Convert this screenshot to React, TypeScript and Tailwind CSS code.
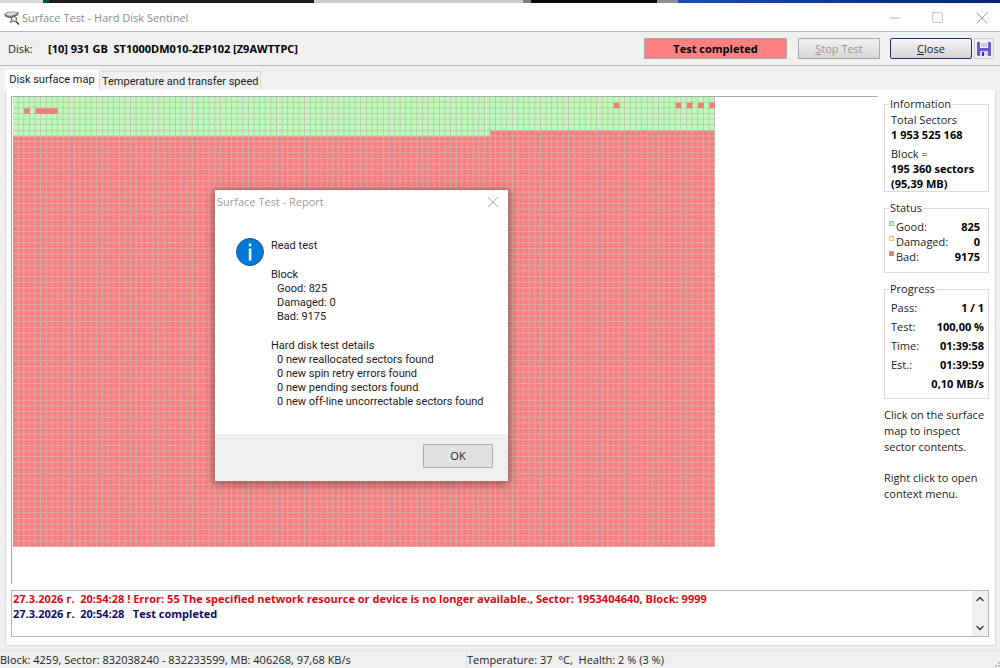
import { useState } from "react";
import { ChevronDown, ChevronUp, Minus, Square, X } from "lucide-react";

const COLUMNS = 125;
const ROWS = 80;
const CELL = 8;

// blocks that failed inside the readable area, as [row, column, count]
const BAD_BLOCKS = [
  [1, 107, 1],
  [1, 118, 1],
  [1, 120, 1],
  [1, 122, 1],
  [1, 124, 1],
  [2, 2, 1],
  [2, 4, 4],
];

const STATUS = [
  { label: "Good:", value: "825", box: "bg-[#c4f5c4] border-[#8fd08f]" },
  { label: "Damaged:", value: "0", box: "bg-[#fbf6c8] border-[#dccb62]" },
  { label: "Bad:", value: "9175", box: "bg-[#e87878] border-[#d98a8a]" },
];

const PROGRESS = [
  ["Pass:", "1 / 1"],
  ["Test:", "100,00 %"],
  ["Time:", "01:39:58"],
  ["Est.:", "01:39:59"],
  ["", "0,10 MB/s"],
];

function DiskIcon() {
  return (
    <svg viewBox="0 0 16 16" className="h-4 w-4 shrink-0">
      <path d="M0 4 4 1.5 15 2 14.5 5 6 8.5 1 6.5Z" fill="#8b9096" />
      <path d="M1.5 4 4.5 2.2 13.5 2.6 10 5 5 6Z" fill="#d5d9dc" />
      <path d="M1 5.5 5.5 7.5 14 4.5" stroke="#5a5f63" strokeWidth="1" fill="none" />
      <circle cx="10" cy="9" r="2.6" fill="#dcebec" stroke="#5d6367" />
      <path d="m12 11.5 3 3" stroke="#3d4245" strokeWidth="1.6" />
      <path d="m6 11 2 1.5" stroke="#5a6a60" strokeWidth="1.5" />
    </svg>
  );
}

function FloppyIcon() {
  return (
    <svg viewBox="0 0 16 16" className="h-4 w-4">
      <path d="M1 1h13l1 1v13H2l-1-1Z" fill="#665bd0" />
      <path d="M4 1h8v6H4Z" fill="#f4f4fb" />
      <path d="M5 3h6M5 5h6" stroke="#a9a5d8" strokeWidth="1" />
      <path d="M4 10h8v5H4Z" fill="#d9d8f2" />
      <path d="M6 11h2v4H6Z" fill="#4338a8" />
    </svg>
  );
}

function SurfaceMap() {
  return (
    <svg
      viewBox={`0 0 ${COLUMNS * CELL} ${ROWS * CELL}`}
      preserveAspectRatio="none"
      className="h-[450px] w-[702px]"
      role="img"
      aria-label="Disk surface map"
    >
      <defs>
        <pattern id="grid" width={CELL} height={CELL} patternUnits="userSpaceOnUse">
          <path d="M7.4 0V8M0 7.4H8" stroke="#ccb8b2" strokeWidth="1.2" fill="none" />
        </pattern>
      </defs>
      <rect width="1000" height="640" fill="#fb7d7f" />
      <rect width="1000" height={6 * CELL} fill="#b6ffb6" />
      <rect y={6 * CELL} width={85 * CELL} height={CELL} fill="#b6ffb6" />
      <rect width="1000" height="640" fill="url(#grid)" />
      {BAD_BLOCKS.map(([row, col, count]) => (
        <rect
          key={`${row}-${col}`}
          x={col * CELL}
          y={row * CELL}
          width={count * CELL}
          height={CELL}
          fill="#ee7e78"
        />
      ))}
    </svg>
  );
}

function Group({ title, children }: { title: string; children: React.ReactNode }) {
  return (
    <fieldset className="border border-[#dcdcdc] px-1">
      <legend className="px-px leading-4">{title}</legend>
      {children}
    </fieldset>
  );
}

function ReportDialog({ onClose }: { onClose: () => void }) {
  return (
    <div
      role="dialog"
      aria-label="Surface Test - Report"
      className="absolute top-[189px] left-[214px] w-[295px] border border-[#a87878] bg-white shadow-[0_2px_9px_rgba(60,0,0,0.45)]"
    >
      <div className="flex h-6 items-center justify-between pr-[5px] pl-0.5 text-[#9b9b9b]">
        <span>Surface Test - Report</span>
        <button aria-label="Close report" onClick={onClose}>
          <X size={20} strokeWidth={1} />
        </button>
      </div>
      <div className="flex h-[220px] gap-[7px] pt-6 pl-[21px] font-[Roboto,sans-serif]">
        <svg viewBox="0 0 28 28" className="h-7 w-7 shrink-0">
          <circle cx="14" cy="14" r="13.5" fill="#0078d7" stroke="#0b62ad" />
          <path d="M12.8 5.5h2.6v2.8h-2.6zM12.8 10.5h2.6v12h-2.6z" fill="#fff" />
        </svg>
        <div className="whitespace-pre pt-px leading-[14px]">
          <p>Read test</p>
          <p className="pt-[15px]">Block</p>
          <div className="pl-1.5">
            <p>Good: 825</p>
            <p>Damaged: 0</p>
            <p>Bad: 9175</p>
          </div>
          <p className="pt-[15px]">Hard disk test details</p>
          <div className="pl-1.5">
            <p>0 new reallocated sectors found</p>
            <p>0 new spin retry errors found</p>
            <p>0 new pending sectors found</p>
            <p>0 new off-line uncorrectable sectors found</p>
          </div>
        </div>
      </div>
      <div className="flex h-[47px] items-center justify-end bg-[#f0f0f0] pr-[15px] pb-[3px]">
        <button onClick={onClose} className="h-6 w-[70px] border border-[#adadad] bg-[#e1e1e1]">
          OK
        </button>
      </div>
    </div>
  );
}

export default function App() {
  const [reportOpen, setReportOpen] = useState(true);

  return (
    <div className="relative flex h-screen flex-col overflow-hidden bg-[#f0f0f0] font-['Open_Sans',sans-serif] text-[11px] leading-4 text-[#1c1c1c]">
      <div className="flex h-[3px] shrink-0">
        <div className="w-[43px] bg-[#d8d8d8]" />
        <div className="w-[6px] bg-[#0b5a26]" />
        <div className="w-[265px] bg-[#1c1c1c]" />
        <div className="w-[209px] bg-[#cdcdcd]" />
        <div className="w-[8px] bg-[#808080]" />
        <div className="w-[126px] bg-[#0c0c0c]" />
        <div className="w-[21px] bg-[#8d8d98]" />
        <div className="flex-1 bg-linear-to-r from-[#1d4fb5] to-[#06256f]" />
      </div>

      <header className="flex h-7 shrink-0 items-center gap-0.5 bg-white pt-px pr-2 pl-1 text-[#8c8c8c]">
        <DiskIcon />
        <h1>Surface Test - Hard Disk Sentinel</h1>
        <div className="ml-auto flex items-center gap-7">
          <button aria-label="Minimize"><Minus size={16} strokeWidth={1} /></button>
          <button aria-label="Maximize"><Square size={13} strokeWidth={1} /></button>
          <button aria-label="Close window"><X size={20} strokeWidth={1} /></button>
        </div>
      </header>

      <div className="flex h-[35px] shrink-0 items-center border-y border-[#b9b9b9] pr-1.5 pl-2">
        <span className="w-10">Disk:</span>
        <b className="whitespace-pre text-black">[10] 931 GB  ST1000DM010-2EP102 [Z9AWTTPC]</b>
        <div className="ml-auto flex items-center">
          <output className="mr-[11px] h-[21px] w-[143px] border border-[#a9a9a9] bg-[#ff8080] text-center leading-[19px] font-bold text-black">
            Test completed
          </output>
          <button disabled className="mr-[10px] h-[21px] w-[82px] border border-[#a9a9a9] bg-linear-to-b from-[#f3f3f3] to-[#d6d6d6] text-[#969696]">
            <u>S</u>top Test
          </button>
          <button className="mr-[2px] h-[21px] w-[82px] rounded-xs border border-[#2a2a72] bg-linear-to-b from-[#f6f6f6] to-[#d4d4d4]">
            <u>C</u>lose
          </button>
          <button aria-label="Save" className="flex h-[21px] w-5 items-center justify-center border border-[#cfcfcf]">
            <FloppyIcon />
          </button>
        </div>
      </div>

      <div role="tablist" className="flex shrink-0 items-end pt-1 pl-[5px] font-[Roboto,sans-serif]">
        <button role="tab" aria-selected className="h-5 w-[94px] bg-white">
          Disk surface map
        </button>
        <button role="tab" aria-selected={false} className="h-[19px] border border-b-0 border-[#dcdcdc] px-0.5 pt-0.5">
          Temperature and transfer speed
        </button>
      </div>

      <main className="mr-1 ml-[5px] flex min-h-0 flex-1 flex-col border border-t-white border-[#dcdcdc] bg-white pt-[5px] pr-1.5 pb-2 pl-[5px]">
        <div className="flex min-h-0 flex-1 gap-1.5">
          <div className="flex-1 border-t border-l border-[#aaaaaa] pl-px">
            <SurfaceMap />
          </div>
          <aside className="w-[105px] shrink-0">
            <Group title="Information">
              <div className="pl-0.5 leading-[15px]">
                <p>Total Sectors</p>
                <b className="text-black">1 953 525 168</b>
                <p className="pt-1">Block =</p>
                <b className="block text-black">195 360 sectors</b>
                <b className="block text-black">(95,39 MB)</b>
              </div>
            </Group>
            <div className="mt-2">
              <Group title="Status">
                <dl className="pt-[3px] pr-1 pb-2 leading-[15px]">
                  {STATUS.map(({ label, value, box }) => (
                    <div key={label} className="flex">
                      <span className={`mt-0.5 mr-0.5 h-[5px] w-[5px] border ${box}`} />
                      <dt>{label}</dt>
                      <dd className="ml-auto font-bold text-black">{value}</dd>
                    </div>
                  ))}
                </dl>
              </Group>
            </div>
            <div className="mt-2">
              <Group title="Progress">
                <dl className="pt-px pb-[5px] pl-0.5 leading-[19px]">
                  {PROGRESS.map(([label, value]) => (
                    <div key={value} className="flex">
                      <dt>{label}</dt>
                      <dd className="ml-auto font-bold text-black">{value}</dd>
                    </div>
                  ))}
                </dl>
              </Group>
            </div>
            <p className="mt-2">Click on the surface map to inspect sector contents.</p>
            <p className="mt-[15px]">Right click to open context menu.</p>
          </aside>
        </div>

        <div className="mt-1.5 flex h-[47px] shrink-0 border border-[#b4b4b4] font-bold">
          <div className="flex-1 whitespace-pre pl-px leading-[15px]">
            <p className="text-[#dc0812]">27.3.2026 г.  20:54:28 ! Error: 55 The specified network resource or device is no longer available., Sector: 1953404640, Block: 9999</p>
            <p className="text-[#0c0c68]">27.3.2026 г.  20:54:28   Test completed</p>
          </div>
          <div className="flex w-4 flex-col items-center justify-between bg-[#f0f0f0] py-0.5 text-[#404040]">
            <button aria-label="Scroll up"><ChevronUp size={12} strokeWidth={3} /></button>
            <button aria-label="Scroll down"><ChevronDown size={12} strokeWidth={3} /></button>
          </div>
        </div>
      </main>

      <footer className="mt-1 flex h-[18px] shrink-0 items-center border-t border-[#e2e2e2]">
        <span className="w-[467px] border-r border-[#dcdcdc]">Block: 4259, Sector: 832038240 - 832233599, MB: 406268, 97,68 KB/s</span>
        <span className="whitespace-pre">Temperature: 37  °C,  Health: 2 % (3 %)</span>
        <svg viewBox="0 0 6 6" className="ml-auto h-1.5 w-1.5 self-end" fill="#bdbdbd">
          <path d="M4 0h2v2H4zM1 3h2v2H1zM4 3h2v2H4z" />
        </svg>
      </footer>

      {reportOpen && <ReportDialog onClose={() => setReportOpen(false)} />}
    </div>
  );
}
